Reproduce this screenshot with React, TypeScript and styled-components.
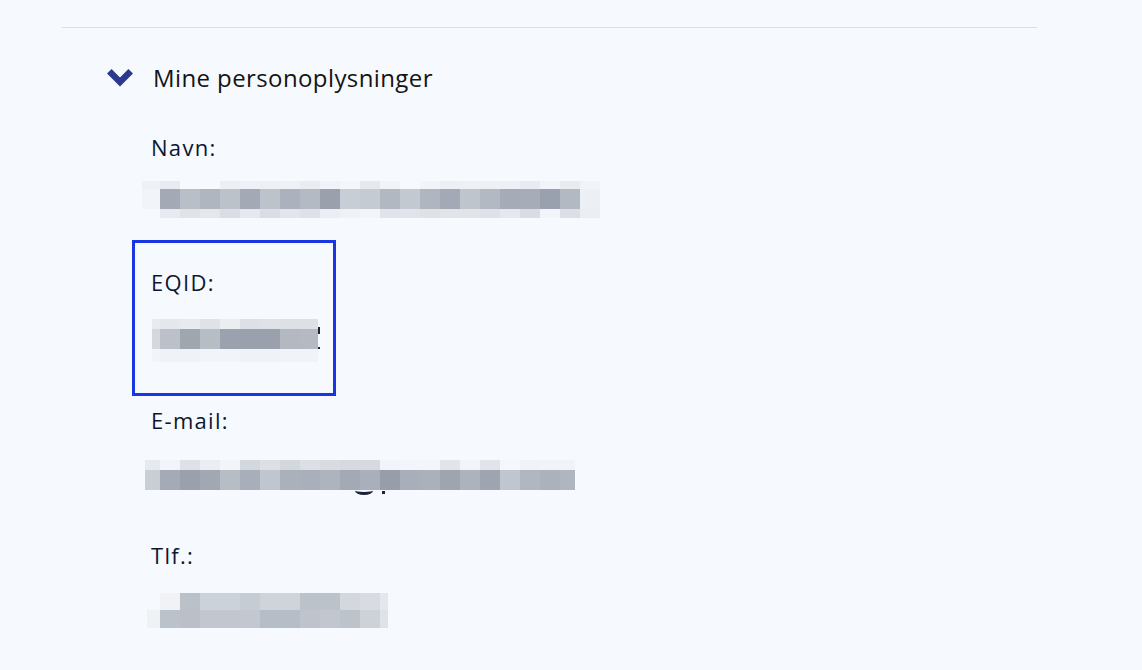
import React from 'react';
import styled, { createGlobalStyle } from 'styled-components';

const BG = '#f6faff';

const GlobalStyle = createGlobalStyle`
  html, body {
    margin: 0;
    padding: 0;
    background: ${BG};
  }
  body {
    font-family: 'Open Sans', 'Noto Sans', sans-serif;
    color: #0c1730;
  }
`;

interface MosaicData {
  cols: number[];
  rows: number[];
  colors: string[][];
}

const span = (first: number, count: number, last: number) => [first, ...Array(count).fill(20), last];

const nameMosaic: MosaicData = {
  cols: span(18, 21, 20),
  rows: [8, 20, 9],
  colors: [
    ['#eef1f5', '#e8ebef', BG, BG, '#eceff3', '#eef1f5', '#edf0f4', '#eef1f5', '#e9ecf0', '#f0f3f7', '#f3f6fa', '#e5e8ec', '#f0f3f7', BG, '#f1f4f8', '#eceff3', '#edf0f4', '#edf0f4', '#edf0f4', '#e8ebef', '#f1f4f8', '#e8ebef', '#f0f3f7'],
    ['#f1f4f8', '#a3aab6', '#b9bfc7', '#b0b6c0', '#bcc2ca', '#a3a9b5', '#bcc3cb', '#acb2bd', '#b4bac4', '#9aa1ad', '#c8ced6', '#c5cbd3', '#b2b8c2', '#c3c9d1', '#b0b6c0', '#a3aab5', '#bfc5cd', '#b3b9c3', '#a5acb7', '#a6acb8', '#9aa1ae', '#b3b9c2', '#eceff3'],
    [BG, '#e7eaee', '#e0e3e8', '#e5e8eb', '#dadde3', '#e5e8ed', '#dadde3', '#e2e5ea', '#dee1e7', '#ebeef2', '#eef1f5', '#f1f4f8', '#e1e4ea', '#e1e4ea', '#dfe3e6', '#e1e4e8', '#e1e4e8', '#dee1e7', '#e5e8ec', '#d9dde2', '#f1f4f8', '#dcdfe5', '#ebeef2'],
  ],
};

const eqidMosaic: MosaicData = {
  cols: span(8, 7, 18),
  rows: [10, 20, 13],
  colors: [
    ['#e8ebef', '#e4e7eb', '#e8ebee', '#dfe2e7', '#ebeef1', '#dde1e6', '#dfe2e7', '#dde0e5', '#dde0e5'],
    ['#d5d9df', '#bcc1c9', '#a0a6b0', '#b7bdc5', '#9ca2ad', '#9aa1ac', '#9aa1ac', '#b4b9c1', '#b5bac2'],
    ['#f1f4f8', '#eff3f7', '#eff3f7', '#f1f4f8', '#f1f4f8', '#eff3f7', '#eff3f7', '#f0f4f8', '#f0f4f8'],
  ],
};

const mailMosaic: MosaicData = {
  cols: span(15, 20, 15),
  rows: [10, 20],
  colors: [
    ['#e6e9ed', '#f1f4f8', '#dee1e7', '#eaedf1', '#f1f4f8', '#d3d7de', '#dcdfe5', '#d3d7de', '#dcdfe5', '#d8dbe1', '#d6dae0', '#d6dae0', '#f1f5f9', '#f2f5f9', '#f2f5f9', '#e1e4e9', '#f1f4f8', '#e1e4e9', '#f4f8fc', '#eff2f6', '#f0f3f7', '#f0f3f7'],
    ['#c9ced5', '#a5abb6', '#9aa0ac', '#a2a8b3', '#b7bdc5', '#a9afba', '#c0c6ce', '#aab1bb', '#aab0bb', '#aeb4be', '#a3a9b5', '#aab0bb', '#979eaa', '#a9afba', '#abb1bb', '#9ea5b1', '#adb3bd', '#9ea4b0', '#c0c6ce', '#b1b7c1', '#acb2bc', '#b0b6c0'],
  ],
};

const phoneMosaic: MosaicData = {
  cols: span(13, 11, 8),
  rows: [17, 18],
  colors: [
    [BG, '#f0f2f5', '#bbc1c9', '#ccd2d9', '#ccd2d9', '#c6ccd4', '#cfd4db', '#cfd4db', '#bcc2ca', '#bcc2ca', '#d3d8de', '#d8dce2', '#e4e8ec'],
    ['#eff2f5', '#bcc2ca', '#bbc0c8', '#c2c7cf', '#c2c7cf', '#c3c8d0', '#b7bdc6', '#b7bdc6', '#bfc4cc', '#c2c7cf', '#bdc3cb', '#cdd2d9', '#dfe3e9'],
  ],
};

const Page = styled.div`
  padding: 27px 105px 40px 62px;
`;

const Divider = styled.hr`
  margin: 0;
  border: none;
  border-top: 1px solid #dadee3;
`;

const Section = styled.section`
  padding-left: 45px;
`;

const SectionHeader = styled.div`
  display: flex;
  align-items: center;
  gap: 20px;
  margin-top: 32px;
  height: 36px;
`;

const Chevron = styled.svg`
  width: 26px;
  height: 18px;
  flex-shrink: 0;
`;

const SectionTitle = styled.h2`
  margin: 0;
  font-size: 24px;
  font-weight: 400;
  letter-spacing: 0.4px;
  color: #141414;
  line-height: 36px;
`;

const FieldList = styled.div`
  display: flex;
  flex-direction: column;
  align-items: flex-start;
  padding-left: 44px;
  margin-top: 37px;
`;

const Field = styled.div<{ $highlight?: boolean }>`
  display: flex;
  flex-direction: column;
  align-items: flex-start;
  ${({ $highlight }) =>
    $highlight
      ? `
    box-sizing: border-box;
    border: 3px solid #1a36e2;
    width: 204px;
    margin-left: -19px;
    padding: 25px 0 31px 16px;
  `
      : ''}
`;

const Label = styled.div`
  font-size: 22px;
  letter-spacing: 1.3px;
  line-height: 28px;
  color: #0c1730;
`;

const MosaicWrap = styled.div<{ $top: number; $left: number }>`
  position: relative;
  margin-top: ${({ $top }) => $top}px;
  margin-left: ${({ $left }) => $left}px;
`;

const MosaicGrid = styled.div`
  display: grid;
`;

const Cell = styled.div<{ $color: string }>`
  background: ${({ $color }) => $color};
`;

const Stroke = styled.span`
  position: absolute;
  background: #1b2335;
`;

const Descender = styled.span`
  position: absolute;
  border-bottom: 3px solid #1b2335;
  border-radius: 0 0 50% 50%;
`;

const Mosaic: React.FC<{ data: MosaicData; top: number; left: number; children?: React.ReactNode }> = ({
  data,
  top,
  left,
  children,
}) => (
  <MosaicWrap $top={top} $left={left}>
    <MosaicGrid
      style={{
        gridTemplateColumns: data.cols.map((c) => `${c}px`).join(' '),
        gridTemplateRows: data.rows.map((r) => `${r}px`).join(' '),
      }}
    >
      {data.colors.map((row, ri) => row.map((color, ci) => <Cell key={`${ri}-${ci}`} $color={color} />))}
    </MosaicGrid>
    {children}
  </MosaicWrap>
);

const Spacer = styled.div<{ $h: number }>`
  height: ${({ $h }) => $h}px;
`;

const App: React.FC = () => {
  return (
    <Page>
      <GlobalStyle />
      <Divider />
      <Section>
        <SectionHeader>
          <Chevron viewBox="0 0 26 18">
            <polygon points="0,4.6 4.6,0 13,8.4 21.4,0 26,4.6 13,17.6" fill="#2c3a8e" />
          </Chevron>
          <SectionTitle>Mine personoplysninger</SectionTitle>
        </SectionHeader>
        <FieldList>
          <Field>
            <Label>Navn:</Label>
            <Mosaic data={nameMosaic} top={20} left={-9} />
          </Field>
          <Spacer $h={22} />
          <Field $highlight>
            <Label>EQID:</Label>
            <Mosaic data={eqidMosaic} top={23} left={1}>
              <Stroke style={{ left: 166, top: 8, width: 2, height: 7 }} />
              <Stroke style={{ left: 166, top: 28, width: 2, height: 2 }} />
            </Mosaic>
          </Field>
          <Spacer $h={10} />
          <Field>
            <Label>E-mail:</Label>
            <Mosaic data={mailMosaic} top={26} left={-6}>
              <Descender style={{ left: 210, top: 26, width: 18, height: 6 }} />
              <Stroke style={{ left: 237, top: 31, width: 3, height: 3 }} />
            </Mosaic>
          </Field>
          <Spacer $h={51} />
          <Field>
            <Label>Tlf.:</Label>
            <Mosaic data={phoneMosaic} top={24} left={-4} />
          </Field>
        </FieldList>
      </Section>
    </Page>
  );
};

export default App;
